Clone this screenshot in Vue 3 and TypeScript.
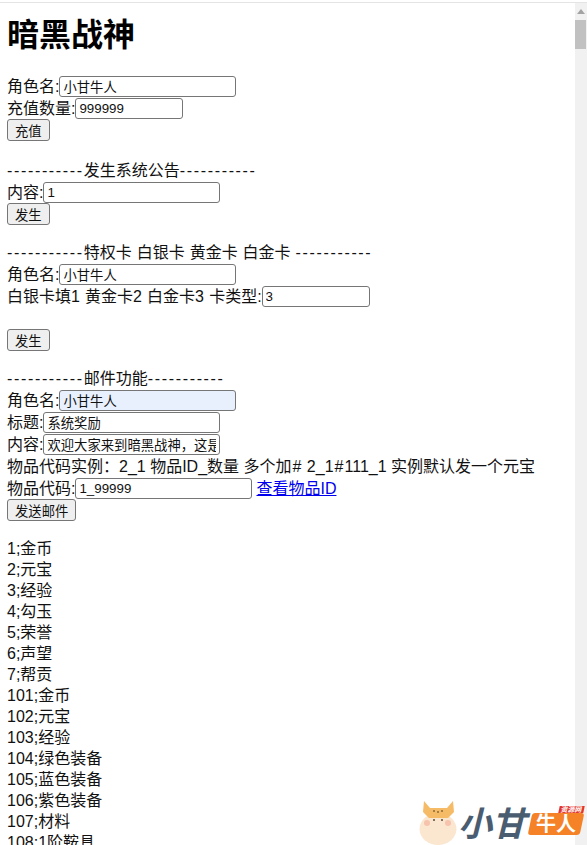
<script setup lang="ts">
const items: string[] = [
  '1;金币', '2;元宝', '3;经验', '4;勾玉', '5;荣誉', '6;声望', '7;帮贡',
  '101;金币', '102;元宝', '103;经验', '104;绿色装备', '105;蓝色装备',
  '106;紫色装备', '107;材料', '108;1阶鞍具'
]
const roleName = '小甘牛人'
const mailBody = '欢迎大家来到暗黑战神，这是一封系统邮件'
const dashes = '-----------'
</script>

<template>
  <div class="window">
    <div class="page">
      <h1>暗黑战神</h1>

      <section class="block">
        <div class="row">角色名:<input class="wide" :value="roleName" /></div>
        <div class="row">充值数量:<input class="short" value="999999" /></div>
        <div class="row"><button>充值</button></div>
      </section>

      <section class="block">
        <div class="title"><span class="dash">{{ dashes }}</span>发生系统公告<span class="dash">{{ dashes }}</span></div>
        <div class="row">内容:<input class="wide" value="1" /></div>
        <div class="row"><button>发生</button></div>
      </section>

      <section class="block">
        <div class="title"><span class="dash">{{ dashes }}</span>特权卡 白银卡 黄金卡 白金卡 <span class="dash">{{ dashes }}</span></div>
        <div class="row">角色名:<input class="wide" :value="roleName" /></div>
        <div class="row spaced">白银卡填1 黄金卡2 白金卡3 卡类型:<input class="short" value="3" /></div>
        <div class="spacer"></div>
        <div class="row"><button>发生</button></div>
      </section>

      <section class="block">
        <div class="title"><span class="dash">{{ dashes }}</span>邮件功能<span class="dash">{{ dashes }}</span></div>
        <div class="row">角色名:<input class="wide filled" :value="roleName" /></div>
        <div class="row">标题:<input class="wide" value="系统奖励" /></div>
        <div class="row">内容:<input class="wide" :value="mailBody" /></div>
        <div class="row">物品代码实例：2_1 物品ID_数量 多个加<span class="hash">#</span> 2_1<span class="hash">#</span>111_1 实例默认发一个元宝</div>
        <div class="row">物品代码:<input class="wide" value="1_99999" /><a href="#">查看物品ID</a></div>
        <div class="row"><button>发送邮件</button></div>
      </section>

      <div v-for="item in items" :key="item" class="item">{{ item }}</div>
    </div>

    <div class="scrollbar">
      <svg class="arrow" width="12" height="17" viewBox="0 0 12 17">
        <path d="M6 6 L10 11 L2 11 Z" fill="#a3a3a3" />
      </svg>
      <div class="thumb"></div>
    </div>

    <div class="logo">
      <svg class="cow" width="38" height="46" viewBox="0 0 38 46">
        <ellipse cx="19" cy="30" rx="18.5" ry="16" fill="#fbe6cf" />
        <path d="M5 2 L11 9 L28 9 L34 2 L35 13 L29 19 L10 19 L4 13 Z" fill="#f6bb66" />
        <circle cx="15" cy="12" r="1" fill="#8a6a3a" />
        <circle cx="19" cy="13" r="1" fill="#8a6a3a" />
        <circle cx="23" cy="12" r="1" fill="#8a6a3a" />
        <circle cx="8" cy="24" r="3" fill="#f7c3ad" />
        <circle cx="29" cy="24" r="3" fill="#f7c3ad" />
        <circle cx="15" cy="21" r="1" fill="#5a4a3a" />
        <circle cx="23" cy="21" r="1" fill="#5a4a3a" />
      </svg>
      <span class="logo-name">小甘</span>
      <span class="logo-badge">牛人<span class="logo-tag">资源网</span></span>
    </div>
  </div>
</template>

<style>
html,
body {
  margin: 0;
  overflow: hidden;
}
</style>

<style scoped>
.window {
  position: relative;
  display: flex;
  width: 587px;
  height: 843px;
  overflow: hidden;
  background: #fff;
  box-sizing: border-box;
  border-top: 1px solid #e4e4e4;
  margin-top: 2px;
  font-family: "Liberation Sans", "Noto Sans CJK SC", sans-serif;
  font-size: 16px;
  line-height: 21px;
  color: #111;
}

.page {
  flex: 1;
  min-width: 0;
  padding: 0 7px;
}

h1 {
  margin: 14px 0 21px;
  font-size: 32px;
  line-height: 37px;
  font-weight: bold;
  color: #000;
}

.block {
  margin-bottom: 17px;
}

h1 + .block {
  margin-bottom: 19px;
}

.row {
  display: flex;
  align-items: center;
  height: 22px;
  white-space: pre-wrap;
}

.spaced {
  word-spacing: 0.7px;
}

.title {
  height: 21px;
  white-space: pre-wrap;
  word-spacing: 0.5px;
}

.dash {
  letter-spacing: 1.65px;
}

.hash {
  padding-left: 1px;
  letter-spacing: 1px;
}

.spacer {
  height: 22px;
}

input {
  box-sizing: border-box;
  height: 21px;
  padding: 1px 3px;
  border: 1px solid #767676;
  border-radius: 3px;
  background: #fff;
  color: #111;
  font: 13.33px "Liberation Sans", "Noto Sans CJK SC", sans-serif;
}

.wide {
  width: 177px;
}

.short {
  width: 108px;
}

.filled {
  background: #e8f0fe;
}

button {
  box-sizing: border-box;
  height: 22px;
  padding: 1px 7px;
  border: 1px solid #767676;
  border-radius: 3px;
  background: #efefef;
  color: #111;
  font: 13.33px "Liberation Sans", "Noto Sans CJK SC", sans-serif;
}

a {
  margin-left: 4px;
  color: #0000ee;
}

.scrollbar {
  flex: none;
  width: 12px;
  background: #f1f1f1;
}

.arrow {
  display: block;
}

.thumb {
  width: 11px;
  height: 29px;
  background: #c1c1c1;
}

.logo {
  position: absolute;
  left: 419px;
  top: 796px;
  display: flex;
  align-items: center;
}

.cow {
  flex: none;
}

.logo-name {
  margin: 3px 2px 0 1px;
  font-size: 34px;
  line-height: 36px;
  font-weight: bold;
  font-style: italic;
  color: #4a5c70;
}

.logo-badge {
  position: relative;
  isolation: isolate;
  margin-top: 4px;
  padding: 0 8px;
  color: #fff;
  font-size: 20px;
  line-height: 22px;
  font-weight: bold;
}

.logo-badge::before {
  content: "";
  position: absolute;
  inset: 0 2px 0 2px;
  z-index: -1;
  background: #f58226;
  border-radius: 3px;
  transform: skewX(-12deg);
}

.logo-tag {
  position: absolute;
  right: 0;
  top: -7px;
  padding: 0 2px;
  background: #e2352c;
  font-size: 7px;
  line-height: 7px;
  transform: skewX(-12deg);
}
</style>
